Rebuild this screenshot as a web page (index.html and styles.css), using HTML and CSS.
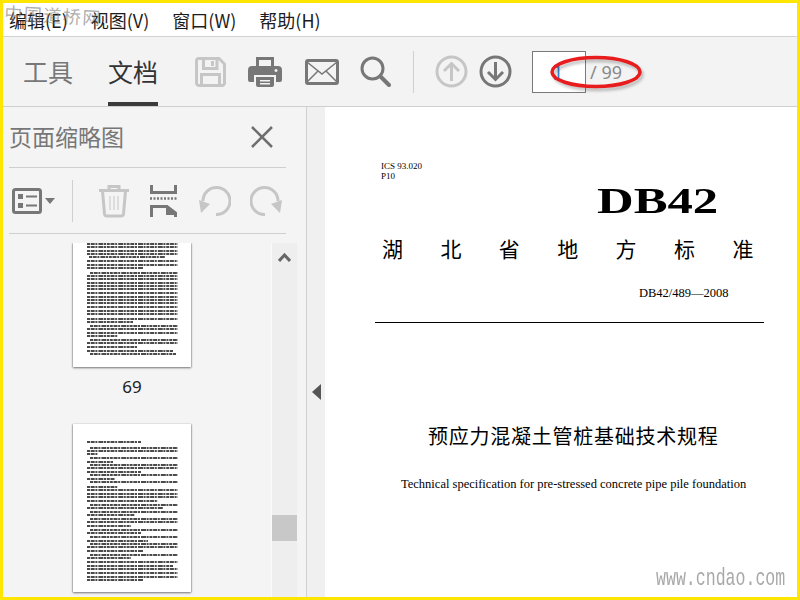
FILE: index.html
```html
<!DOCTYPE html>
<html lang="zh-CN">
<head>
<meta charset="utf-8">
<title>预应力混凝土管桩基础技术规程</title>
<link rel="stylesheet" href="styles.css">
</head>
<body>
<div class="frame">
  <nav class="menubar">
    <span class="menu">编辑(E)</span>
    <span class="menu">视图(V)</span>
    <span class="menu">窗口(W)</span>
    <span class="menu">帮助(H)</span>
  </nav>
  <header class="toolbar">
    <span class="tab">工具</span>
    <span class="tab tab-active">文档</span>
    <div class="tools">
      <svg class="ic save" width="31" height="30" viewBox="0 0 31 30"><path class="s-dis" d="M3.500 1.500H24L29.500 7V26a2.500 2.500 0 0 1-2.500 2.500H4A2.500 2.500 0 0 1 1.500 26V4a2.500 2.500 0 0 1 2-2.500Z"/><path class="s-dis" d="M8.500 2V11.500H22V2M6.500 29V17.500H24.500V29"/><path class="f-dis" d="M16 4H19V9H16Z"/></svg>
      <svg class="ic print" width="34" height="32" viewBox="0 0 34 32"><path class="f-dark" fill-rule="evenodd" d="M8 1H26V10H23V4H11V10H8ZM4 10H30a4 4 0 0 1 4 4V24a2 2 0 0 1-2 2H28V19H6V26H2a2 2 0 0 1-2-2V14a4 4 0 0 1 4-4ZM28 13a1.500 1.500 0 1 0 .01 0ZM8 21H26V29a2 2 0 0 1-2 2H10a2 2 0 0 1-2-2ZM12 24V25.500H22V24ZM12 27V28.500H22V27Z"/></svg>
      <svg class="ic mail" width="34" height="26" viewBox="0 0 34 26"><rect class="s-dark" x="1.500" y="1.500" width="31" height="23" rx="1.500"/><path class="s-thin" d="M2 3 17 15 32 3M2 23 13 12M32 23 21 12"/></svg>
      <svg class="ic search" width="31" height="31" viewBox="0 0 31 31"><circle class="s-dark" cx="12.500" cy="12.500" r="10.500"/><path class="s-dark s-round" d="M20.500 20.500 29 29"/></svg>
      <span class="sep"></span>
      <svg class="ic up" width="33" height="33" viewBox="0 0 33 33"><circle class="s-dis" cx="16.500" cy="16.500" r="14.500"/><path class="s-dis" d="M16.500 26V9M9 16 16.500 8.500 24 16"/></svg>
      <svg class="ic down" width="33" height="33" viewBox="0 0 33 33"><circle class="s-dark" cx="16.500" cy="16.500" r="14.500"/><path class="s-dark" d="M16.500 7V24M9 17 16.500 24.500 24 17"/></svg>
      <span class="pagebox">1</span>
      <span class="pagecount">/ 99</span>
    </div>
  </header>
  <main class="body">
    <aside class="panel">
      <div class="panel-head">
        <h2 class="panel-title">页面缩略图</h2>
        <svg class="close" width="24" height="24" viewBox="0 0 24 24"><path class="s-close" d="M2 2 22 22M22 2 2 22"/></svg>
      </div>
      <div class="panel-tools">
        <svg class="ic listic" width="30" height="26" viewBox="0 0 30 26"><rect class="s-dark" x="1.500" y="1.500" width="27" height="23" rx="2"/><path class="f-dark" d="M6 6h5v5H6zM6 15h5v5H6zM14 7.500h11v2H14zM14 16.500h11v2H14z"/></svg>
        <svg class="caret" width="10" height="6" viewBox="0 0 10 6"><path class="f-dark" d="M0 0H10L5 6Z"/></svg>
        <span class="sep sep-panel"></span>
        <svg class="ic trash" width="30" height="34" viewBox="0 0 30 34"><path class="s-dis" d="M0 6.500H30M10 6V2.500H20V6M3.500 7 5.500 30a2.500 2.500 0 0 0 2.500 2H22a2.500 2.500 0 0 0 2.500-2L26.500 7"/><path class="s-thin-dis" d="M11 12V26M15 12V26M19 12V26"/></svg>
        <svg class="ic crop" width="27" height="33" viewBox="0 0 27 33"><path class="s-dark" d="M1.500 1V8.500H25.500V1M1.500 33V22.500H17L25.500 29V33"/><path class="s-dots" d="M0 14.500H27"/><path class="f-dark" d="M16 23H18L26 29.500V31H16Z"/></svg>
        <svg class="ic rotl" width="32" height="32" viewBox="0 0 32 32"><path class="s-dis" d="M17 29.500A13.500 13.500 0 1 0 4 16"/><path class="f-dis" d="M0 15 11 19 2 28Z"/></svg>
        <svg class="ic rotr" width="32" height="32" viewBox="0 0 32 32"><path class="s-dis" d="M15 29.500A13.500 13.500 0 1 1 28 16"/><path class="f-dis" d="M32 15 21 19 30 28Z"/></svg>
      </div>
      <div class="thumbs">
        <div class="thumb-list">
          <figure class="thumb">
            <div class="sheet sheet-a">
              <svg width="118" height="124" viewBox="0 0 118 124"><path class="txt" d="M14 1H105M14 4H105M14 8H105M14 11H105M16 14H92M14 18H105M14 22H105M14 25H70M17 30H105M14 33H105M14 36H105M14 40H105M14 43H105M14 46H105M14 50H105M14 54H105M14 57H105M14 60H105M14 64H105M14 68H105M14 71H105M14 76H105M14 79H60M17 83H105M14 86H105M14 90H105M14 93H45M17 97H105M14 100H105M14 104H65M14 108H100M17 111H103"/></svg>
            </div>
            <figcaption class="thumb-label">69</figcaption>
          </figure>
          <figure class="thumb">
            <div class="sheet sheet-b">
              <svg width="118" height="168" viewBox="0 0 118 168"><path class="txt" d="M14 18H68M17 24H105M14 27H105M14 30H25M17 34H105M14 38H40M17 41H105M14 44H105M14 48H68M17 51H105M14 55H42M17 58H105M14 63H45M14 66H105M14 70H105M14 73H105M14 77H85M17 81H105M14 84H90M17 88H105M14 91H62M17 95H105M14 98H105M14 102H58M17 106H105M14 109H68M17 113H105M14 117H75M17 120H105M14 123H105M14 127H70M17 131H105M14 134H58M14 138H105M14 142H100M14 145H105M14 149H105M14 153H105M14 156H70"/></svg>
            </div>
          </figure>
        </div>
        <div class="scrollbar">
          <svg class="chev" width="13" height="9" viewBox="0 0 13 9"><path class="s-chev" d="M1 8 6.500 2 12 8"/></svg>
          <div class="scroll-thumb"></div>
        </div>
      </div>
    </aside>
    <div class="gutter"><svg width="9" height="16" viewBox="0 0 9 16"><path class="f-arrow" d="M9 0V16L0 8Z"/></svg></div>
    <article class="doc">
      <p class="ics">ICS 93.020<br>P10</p>
      <p class="db"><span class="db-in">DB42</span></p>
      <p class="province">湖北省地方标准</p>
      <p class="code">DB42/489—2008</p>
      <hr class="rule">
      <h1 class="title">预应力混凝土管桩基础技术规程</h1>
      <p class="en">Technical specification for pre-stressed concrete pipe pile foundation</p>
    </article>
  </main>
  <svg class="ring" width="108" height="48" viewBox="0 0 108 48"><ellipse class="ring-shadow" cx="55" cy="27" rx="44" ry="14.500"/><ellipse class="ring-line" cx="53" cy="24" rx="44" ry="14.500"/></svg>
  <span class="wm-top">中国道桥网</span>
  <span class="wm-bottom">www.cndao.com</span>
</div>
</body>
</html>
```
FILE: styles.css
```css
* { box-sizing: border-box; }
html, body { margin: 0; padding: 0; }
body { width: 800px; height: 600px; overflow: hidden; font-family: "Noto Sans CJK SC", "Noto Sans", sans-serif; }
p, h1, h2, figure { margin: 0; font-weight: normal; }

.frame { position: relative; width: 800px; height: 600px; border: 3px solid #ffe600; display: flex; flex-direction: column; background: #fff; }

.menubar { height: 34px; flex: none; display: flex; align-items: center; padding: 0 0 0 6px; gap: 23px; background: #fff; border-bottom: 1px solid #d2d2d2; font-size: 18px; color: #1c1c1c; }
.menu { line-height: 34px; white-space: nowrap; }

.toolbar { height: 70px; flex: none; display: flex; background: #f3f3f3; border-bottom: 1px solid #cfcfcf; padding-left: 20px; }
.tab { width: 50px; margin-right: 35px; height: 69px; line-height: 68px; font-size: 25px; color: #777; text-align: center; white-space: nowrap; }
.tab-active { color: #333; border-bottom: 4px solid #3b3b3b; margin-right: 37px; }
.tools { display: flex; align-items: center; height: 69px; }
.ic { flex: none; display: block; }
.save { margin-right: 22px; }
.print { margin-right: 23px; }
.mail { margin-right: 21px; }
.search { margin-right: 22px; }
.sep { width: 1px; height: 42px; background: #cfcfcf; flex: none; }
.up { margin: 0 11px 0 21px; }
.down { margin-right: 20px; }
.pagebox { width: 54px; height: 42px; border: 1px solid #7a7a7a; background: #fff; color: #2f7fd0; font-size: 18px; line-height: 40px; text-align: right; padding-right: 22px; flex: none; }
.pagecount { margin-left: 4px; font-size: 18px; color: #8a8a8a; font-family: "Noto Sans", sans-serif; }

.f-dis { fill: #c6c6c6; }
.f-dark { fill: #777; }
.f-arrow { fill: #555; }
.s-dark, .s-dis, .s-thin, .s-thin-dis, .s-close, .s-chev, .s-dots { fill: none; }
.s-dark { stroke: #777; stroke-width: 3; }
.s-round { stroke-linecap: round; stroke-width: 4; }
.s-thin { stroke: #777; stroke-width: 1.500; }
.s-dis { stroke: #c6c6c6; stroke-width: 3; }
.s-thin-dis { stroke: #c6c6c6; stroke-width: 1; }
.s-close { stroke: #6f6f6f; stroke-width: 2.500; }
.s-chev { stroke: #666; stroke-width: 3; }
.s-dots { stroke: #777; stroke-width: 2.500; stroke-dasharray: 2 1.500; }

.body { flex: 1; min-height: 0; display: flex; overflow: hidden; }
.panel { width: 304px; flex: none; background: #f4f4f4; border-right: 1px solid #cfcfcf; display: flex; flex-direction: column; padding-left: 6px; }
.panel-head { height: 61px; flex: none; width: 277px; display: flex; align-items: center; justify-content: space-between; border-bottom: 1px solid #cfcfcf; padding-right: 12px; }
.panel-title { font-size: 23px; color: #777; line-height: 58px; margin-bottom: 2px; white-space: nowrap; }
.panel-tools { height: 66px; flex: none; width: 277px; display: flex; align-items: center; border-bottom: 1px solid #cfcfcf; padding-left: 3px; }
.caret { flex: none; margin-left: 3px; }
.sep-panel { margin-left: 17px; }
.trash { margin-left: 26px; }
.crop { margin-left: 21px; }
.rotl { margin-left: 22px; }
.rotr { margin-left: 19px; }

.thumbs { flex: 1; min-height: 0; margin-top: 9px; display: flex; overflow: hidden; }
.thumb-list { width: 262px; flex: none; display: flex; flex-direction: column; padding-left: 64px; }
.thumb { width: 118px; }
.sheet { width: 118px; background: #fff; box-shadow: 0 1px 2px rgba(0,0,0,.5), 1px 0 1px rgba(0,0,0,.12), -1px 0 1px rgba(0,0,0,.12); }
.sheet svg { display: block; filter: blur(.45px); }
.sheet-a { height: 124px; }
.sheet-b { height: 168px; }
.thumb-label { height: 57px; line-height: 40px; text-align: center; font-size: 17px; color: #222; font-family: "Noto Sans", sans-serif; }
.txt { fill: none; stroke: #111; stroke-width: 1.600; stroke-dasharray: 3 .7 4 .7 2 1 5 .6 2 .8; }

.scrollbar { width: 26px; flex: none; background: #eee; border-left: 1px solid #fafafa; display: flex; flex-direction: column; align-items: center; padding-top: 10px; }
.chev { flex: none; }
.scroll-thumb { width: 25px; height: 26px; margin-top: 253px; background: #c8c8c8; flex: none; }

.gutter { width: 18px; flex: none; background: #f0f0f0; display: flex; align-items: center; justify-content: flex-start; padding: 80px 0 0 5px; }

.doc { flex: 1; min-width: 0; background: #fff; padding: 54px 0 0 50px; font-family: "Liberation Serif", "Noto Sans CJK SC", serif; color: #000; overflow: hidden; }
.ics { font-size: 9px; line-height: 10px; margin-left: 6px; }
.db { margin: 1px 0 0 222px; height: 40px; line-height: 40px; font-size: 35px; font-weight: bold; }
.db-in { display: inline-block; transform: scaleX(1.45); transform-origin: 0 50%; }
.province { margin: 11px 0 0 7px; font-family: "Noto Sans CJK SC", sans-serif; font-size: 21px; line-height: 30px; letter-spacing: 37.400px; white-space: nowrap; }
.code { margin: 22px 0 0 264px; font-size: 12.500px; line-height: 16px; white-space: nowrap; }
.rule { margin: 21px 0 0 0; width: 389px; height: 1px; border: 0; background: #000; }
.title { margin: 98px 0 0 53px; font-family: "Noto Sans CJK SC", sans-serif; font-size: 20px; line-height: 30px; letter-spacing: .750px; white-space: nowrap; }
.en { margin: 25px 0 0 26px; font-size: 12.500px; line-height: 16px; white-space: nowrap; }

.ring { position: absolute; left: 540px; top: 45px; }
.ring-line { fill: none; stroke: #e81c1c; stroke-width: 3.500; }
.ring-shadow { fill: none; stroke: rgba(60,60,60,.35); stroke-width: 3; filter: blur(1.500px); }
.wm-top { position: absolute; left: 2px; top: -1px; font-family: "Noto Sans CJK SC", sans-serif; font-size: 18px; line-height: 20px; letter-spacing: 1.500px; color: rgba(120,120,120,.6); transform: rotate(3deg); transform-origin: 0 0; white-space: nowrap; }
.wm-bottom { position: absolute; left: 653px; top: 563px; font-family: "Liberation Mono", monospace; font-size: 24px; line-height: 26px; color: #a8a8a8; transform: scaleX(.69); transform-origin: 0 0; white-space: nowrap; }
```
